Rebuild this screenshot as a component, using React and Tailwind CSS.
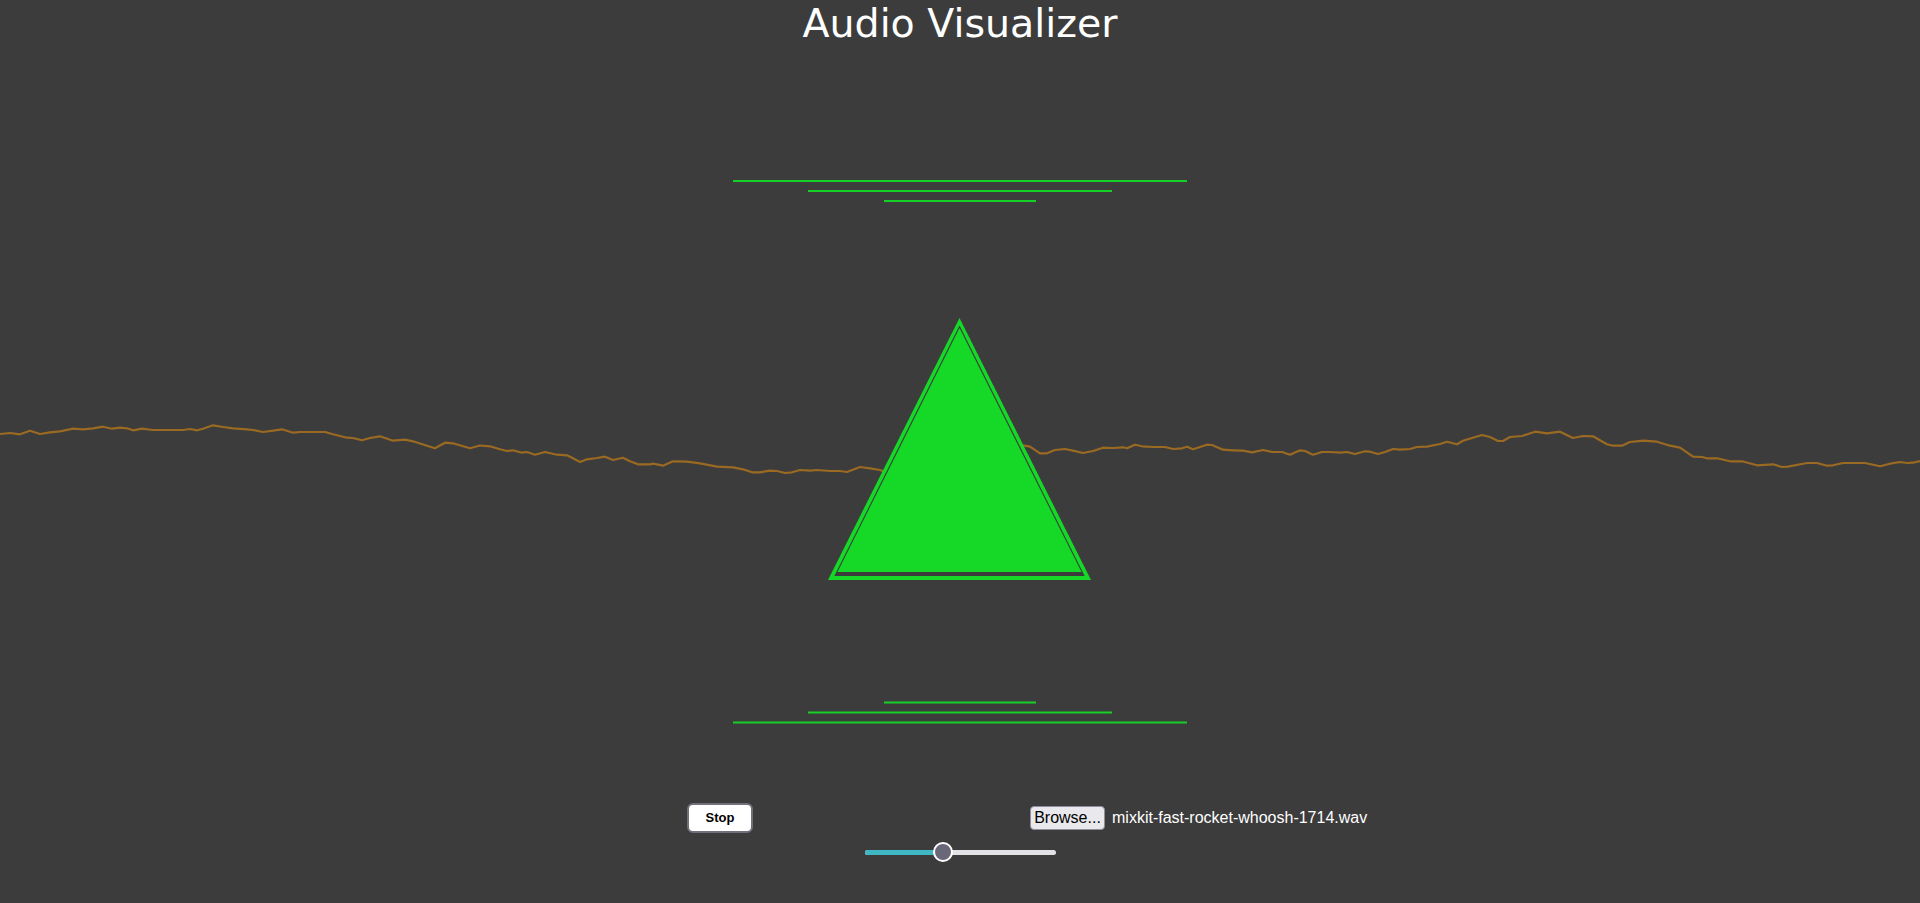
import React from 'react';

// waveform samples traced across the full width (page coords)
const wave = [
  [0, 434], [10, 433], [20, 434.3], [30, 430.7], [40, 434], [50, 432.3], [60, 431.3], [73, 428.7], [83, 429.3],
  [93, 428.3], [103, 426.7], [112, 428.7], [120, 427.7], [127, 428.3], [133, 430.3], [142, 428.7], [153, 430],
  [167, 430], [183, 430], [190, 429], [197, 430.3], [203, 428.7], [213, 425.3], [223, 427], [233, 428.3],
  [247, 429.3], [253, 430], [263, 432], [273, 430.7], [282, 429.3], [293, 432.7], [300, 432], [325, 432],
  [333, 434.3], [347, 437.7], [353, 438], [362, 440.3], [370, 438], [380, 436.3], [393, 440.7], [405, 439.7],
  [413, 441.3], [427, 445.7], [435, 448.3], [445, 442.7], [453, 443.3], [470, 448.3], [480, 445.5],
  [490, 446.3], [500, 449.3], [507, 451], [513, 450.3], [522, 452.7], [527, 452], [535, 454.7], [545, 452],
  [557, 454.7], [567, 455.3], [572, 457.7], [580, 462], [587, 459.3], [597, 458], [605, 456.7], [613, 460],
  [623, 457.7], [630, 461.3], [638, 464.3], [650, 464.3], [653, 463.7], [663, 465.7], [673, 461.3],
  [687, 461.7], [700, 463.3], [717, 466.7], [733, 467.3], [743, 469.3], [752, 472.3], [760, 472.3],
  [770, 470.7], [777, 471], [785, 473], [792, 472.3], [800, 470], [810, 470.7], [817, 470], [830, 471],
  [840, 471], [847, 472], [860, 467], [870, 468.3], [880, 470], [887, 472.7], [950, 462], [1010, 448],
  [1023, 445.3], [1030, 446.7], [1040, 453.3], [1047, 453.3], [1055, 450], [1065, 449], [1073, 450.7],
  [1083, 453], [1093, 451], [1103, 447.7], [1113, 448], [1123, 447.3], [1127, 448.3], [1135, 444.7],
  [1142, 446.3], [1153, 447], [1165, 447], [1173, 449], [1182, 448.3], [1187, 446.7], [1193, 449.3],
  [1207, 444.7], [1212, 445], [1223, 449.7], [1233, 450.3], [1243, 450.7], [1252, 452.3], [1263, 450],
  [1272, 452], [1282, 452], [1290, 454.7], [1300, 450.3], [1305, 451], [1313, 454.7], [1322, 452],
  [1330, 452], [1340, 452.7], [1347, 452], [1355, 454], [1365, 451.3], [1370, 451.7], [1378, 454],
  [1385, 452], [1393, 449], [1400, 449.7], [1410, 449], [1417, 447], [1427, 446.7], [1440, 444],
  [1447, 441.7], [1457, 444.3], [1463, 440.7], [1472, 438], [1482, 435], [1490, 437], [1498, 441],
  [1503, 441], [1510, 437], [1522, 436], [1535, 431.7], [1547, 433.3], [1560, 431.7], [1573, 438],
  [1583, 436], [1593, 436.3], [1607, 444.3], [1613, 445.7], [1622, 445.7], [1630, 442], [1643, 440.7],
  [1657, 441.7], [1670, 445.7], [1680, 447.7], [1693, 456.7], [1702, 457], [1707, 458.3], [1717, 458.3],
  [1730, 461.3], [1742, 461.3], [1757, 465.3], [1773, 464.3], [1782, 467], [1788, 466.7], [1807, 463],
  [1817, 463], [1827, 465.7], [1833, 465.3], [1843, 463], [1865, 463], [1880, 466.3], [1890, 463.7],
  [1900, 462], [1907, 463], [1913, 462.7], [1920, 461],
];

const bars = [
  { y: 180, x1: 733, x2: 1187 },
  { y: 190, x1: 808, x2: 1112 },
  { y: 200, x1: 884, x2: 1036 },
  { y: 701.5, x1: 884, x2: 1036 },
  { y: 711.5, x1: 808, x2: 1112 },
  { y: 721.5, x1: 733, x2: 1187 },
];

function Visualizer() {
  const d = wave.map(([x, y], i) => `${i ? 'L' : 'M'}${x} ${y}`).join(' ');
  return (
    <svg width="1920" height="757" viewBox="0 46 1920 757" className="block">
      <path d={d} fill="none" stroke="#9a6a22" strokeWidth="2.2" strokeLinejoin="round" />
      {bars.map((b, i) => (
        <rect key={i} x={b.x1} y={b.y} width={b.x2 - b.x1} height="2" fill="#16cf27" />
      ))}
      <polygon points="959.5,318 828,580 1091,580" fill="#15d827" />
      <polygon points="959.5,325.5 834.3,576 1084.7,576" fill="#3c3c3c" />
      <polygon points="959.5,328 837.5,572 1081.5,572" fill="#15d827" />
    </svg>
  );
}

export default function App() {
  return (
    <div className="min-h-screen w-full overflow-hidden bg-[#3c3c3c] font-['Liberation_Sans',Arial,sans-serif]">
      <h1 className="text-center text-white text-[39.5px] leading-[46px] font-normal font-['DejaVu_Sans',sans-serif]">
        Audio Visualizer
      </h1>

      <Visualizer />

      {/* controls */}
      <div className="flex justify-center">
        <div className="ml-[137px] flex items-center gap-[277px]">
          <button className="h-[30px] w-[66px] rounded-[6px] border-2 border-[#70707b] bg-white text-[13px] font-bold text-black">
            Stop
          </button>
          <div className="flex w-[340px] items-center">
            <button className="h-[24px] w-[75px] rounded-[4px] border border-[#8f8f9d] bg-[#e9e9ed] text-[16px] leading-[20px] text-black">
              Browse...
            </button>
            <span className="ml-[7px] whitespace-nowrap text-[16px] text-white">mixkit-fast-rocket-whoosh-1714.wav</span>
          </div>
        </div>
      </div>

      <div className="mt-[9px] flex justify-center">
        <div className="relative flex h-[20px] w-[191px] items-center">
          <div className="flex h-[5px] w-full overflow-hidden rounded-full bg-[#e1e1e6]">
            <div className="h-full w-[78px] bg-[#40b8c4]" />
          </div>
          <div className="absolute left-[68px] top-0 h-[20px] w-[20px] rounded-full border-2 border-white bg-[#686878]" />
        </div>
      </div>
    </div>
  );
}
